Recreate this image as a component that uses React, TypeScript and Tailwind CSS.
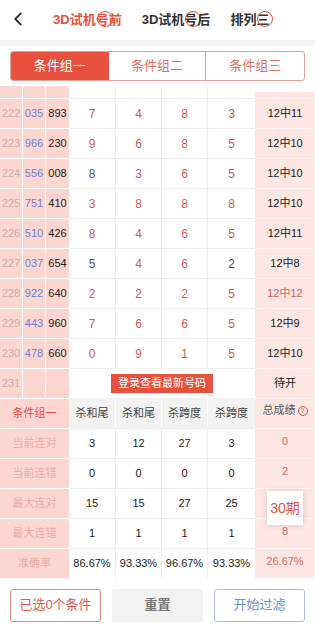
import { ChevronLeft } from 'lucide-react';

const rows = [
  { no: '222', a: '035', b: '893', v: [['7', 1], ['4', 1], ['8', 1], ['3', 1]], r: '12中11' },
  { no: '223', a: '966', b: '230', v: [['9', 1], ['6', 1], ['8', 1], ['5', 1]], r: '12中10' },
  { no: '224', a: '556', b: '008', v: [['8', 0], ['3', 1], ['6', 1], ['5', 1]], r: '12中10' },
  { no: '225', a: '751', b: '410', v: [['3', 1], ['8', 1], ['8', 1], ['8', 1]], r: '12中10' },
  { no: '226', a: '510', b: '426', v: [['8', 1], ['4', 1], ['6', 1], ['5', 1]], r: '12中11' },
  { no: '227', a: '037', b: '654', v: [['5', 0], ['4', 1], ['6', 1], ['2', 0]], r: '12中8' },
  { no: '228', a: '922', b: '640', v: [['2', 1], ['2', 1], ['2', 1], ['5', 1]], r: '12中12', hot: true },
  { no: '229', a: '443', b: '960', v: [['7', 1], ['6', 1], ['6', 1], ['5', 1]], r: '12中9' },
  { no: '230', a: '478', b: '660', v: [['0', 1], ['9', 1], ['1', 1], ['5', 1]], r: '12中10' },
];

const stats = [
  { label: '当前连对', v: ['3', '12', '27', '3'], t: '0' },
  { label: '当前连错', v: ['0', '0', '0', '0'], t: '2' },
  { label: '最大连对', v: ['15', '15', '27', '25'], t: '' },
  { label: '最大连错', v: ['1', '1', '1', '1'], t: '8' },
  { label: '准确率', v: ['86.67%', '93.33%', '96.67%', '93.33%'], t: '26.67%' },
];

function Tab({ text, mark, active }: { text: string; mark: number; active?: boolean }) {
  return (
    <div className={`flex text-[13px] font-bold ${active ? 'text-[#e8503f]' : 'text-[#333]'}`}>
      {text.split('').map((c, i) => (
        <span key={i} className="relative">
          {c}
          {i === mark && (
            <span className="absolute left-[1px] top-[1px] w-[16px] h-[16px] rounded-full border-[1.5px] border-[#e8503f]" />
          )}
        </span>
      ))}
    </div>
  );
}

const dataCols = 'grid grid-cols-[23px_23px_23px_47px_46px_46px_47px_1fr]';
const statCols = 'grid grid-cols-[69px_47px_46px_46px_47px_1fr]';

export default function App() {
  return (
    <div className="w-[315px] h-[630px] bg-white overflow-hidden flex flex-col" style={{ fontFamily: '"Liberation Sans", "Noto Sans CJK SC", sans-serif' }}>
      {/* Header */}
      <div className="h-[40px] flex items-center relative">
        <ChevronLeft className="absolute left-[7px] top-[8px] text-[#333]" size={22} strokeWidth={2} />
        <div className="flex items-center gap-[20px] ml-[53px]">
          <Tab text="3D试机号前" mark={4} active />
          <Tab text="3D试机号后" mark={4} />
          <Tab text="排列三" mark={2} />
        </div>
      </div>
      <div className="h-[6px] bg-[#f4f4f4]" />

      {/* Segment */}
      <div className="px-[10px] py-[5px]">
        <div className="h-[30px] grid grid-cols-3 border border-[#e3a29c] rounded-[3px] overflow-hidden text-[13px]">
          <div className="bg-[#e8503f] text-white flex items-center justify-center">条件组一</div>
          <div className="text-[#d9736a] flex items-center justify-center border-r border-[#e3a29c]">条件组二</div>
          <div className="text-[#d9736a] flex items-center justify-center">条件组三</div>
        </div>
      </div>

      {/* Data table */}
      <div className="text-[11px]">
        <div className={`${dataCols} h-[12px]`}>
          <div className="bg-[#fdd6d1] border-r border-white" />
          <div className="bg-[#fdd6d1] border-r border-white" />
          <div className="bg-[#fdd6d1]" />
          <div className="border-r border-[#eee]" />
          <div className="border-r border-[#eee]" />
          <div className="border-r border-[#eee]" />
          <div />
          <div className="mt-[6px] bg-[#fde7e5]" />
        </div>
        {rows.map((r) => (
          <div key={r.no} className={`${dataCols} h-[30px]`}>
            <div className="bg-[#fdd6d1] border-r border-t border-white text-[#c4b1b0] flex items-center justify-center">{r.no}</div>
            <div className="bg-[#fdd6d1] border-r border-t border-white text-[#6f7fd8] flex items-center justify-center">{r.a}</div>
            <div className="bg-[#fdd6d1] border-t border-white text-[#222] flex items-center justify-center">{r.b}</div>
            {r.v.map(([n, red], i) => (
              <div
                key={i}
                className={`border-t border-[#eee] ${i < 3 ? 'border-r' : ''} flex items-center justify-center text-[12px] ${red ? 'text-[#c9605d]' : 'text-[#555]'}`}
              >
                {n}
              </div>
            ))}
            <div className={`bg-[#fde7e5] border-t border-[#fdf3f2] flex items-center justify-center text-[11px] ${r.hot ? 'text-[#d9605a]' : 'text-[#222]'}`}>
              {r.r}
            </div>
          </div>
        ))}
        <div className={`${dataCols} h-[30px]`}>
          <div className="bg-[#fdd6d1] border-r border-t border-white text-[#c4b1b0] flex items-center justify-center">231</div>
          <div className="bg-[#fdd6d1] border-r border-t border-white" />
          <div className="bg-[#fdd6d1] border-t border-white" />
          <div className="col-span-4 border-t border-[#eee] flex items-center justify-center">
            <div className="w-[102px] h-[19px] bg-[#e8503f] text-white text-[11px] flex items-center justify-center">登录查看最新号码</div>
          </div>
          <div className="bg-[#fde7e5] border-t border-[#fdf3f2] flex items-center justify-center text-[#222]">待开</div>
        </div>
      </div>

      {/* Stats */}
      <div className="text-[11px] relative">
        <div className={`${statCols} h-[30px]`}>
          <div className="bg-[#fdd6d1] border-t border-white text-[#e8503f] flex items-center justify-center">条件组一</div>
          {['杀和尾', '杀和尾', '杀跨度', '杀跨度'].map((h, i) => (
            <div key={i} className={`bg-[#f3f3f3] border-t border-[#eee] ${i < 3 ? 'border-r border-r-white' : ''} text-[#444] flex items-center justify-center`}>{h}</div>
          ))}
          <div className="bg-[#fde7e5] border-t border-[#fdf3f2] text-[#555] flex items-center justify-center gap-[2px] pb-[6px]">
            总成绩
            <span className="w-[10px] h-[10px] rounded-full border border-[#e8503f] text-[#e8503f] text-[7px] leading-none flex items-center justify-center">?</span>
          </div>
        </div>
        {stats.map((s) => (
          <div key={s.label} className={`${statCols} h-[30px]`}>
            <div className="bg-[#fdd6d1] border-t border-white text-[#e9aca6] flex items-center justify-center">{s.label}</div>
            {s.v.map((n, i) => (
              <div key={i} className={`border-t border-[#eee] ${i < 3 ? 'border-r' : ''} text-[#222] flex items-center justify-center`}>{n}</div>
            ))}
            <div className="bg-[#fde7e5] border-t border-[#fdf3f2] text-[#dc6b64] flex items-center justify-center pb-[4px]">{s.t}</div>
          </div>
        ))}
        <div className="absolute left-[267px] top-[93px] w-[36px] h-[34px] bg-white shadow-[0_0_6px_rgba(0,0,0,0.15)] text-[#e8503f] text-[14px] flex items-center justify-center">
          30期
        </div>
      </div>

      {/* Bottom bar */}
      <div className="flex-1 flex items-center justify-between px-[10px] pt-[2px] text-[13px]">
        <div className="w-[91px] h-[33px] border border-[#e08b86] rounded-[3px] text-[#e05a50] flex items-center justify-center">已选0个条件</div>
        <div className="w-[91px] h-[33px] bg-[#f2f2f2] rounded-[3px] text-[#777] font-bold flex items-center justify-center">重置</div>
        <div className="w-[91px] h-[33px] border border-[#a9bde8] rounded-[3px] text-[#6c8fd8] flex items-center justify-center">开始过滤</div>
      </div>
    </div>
  );
}
